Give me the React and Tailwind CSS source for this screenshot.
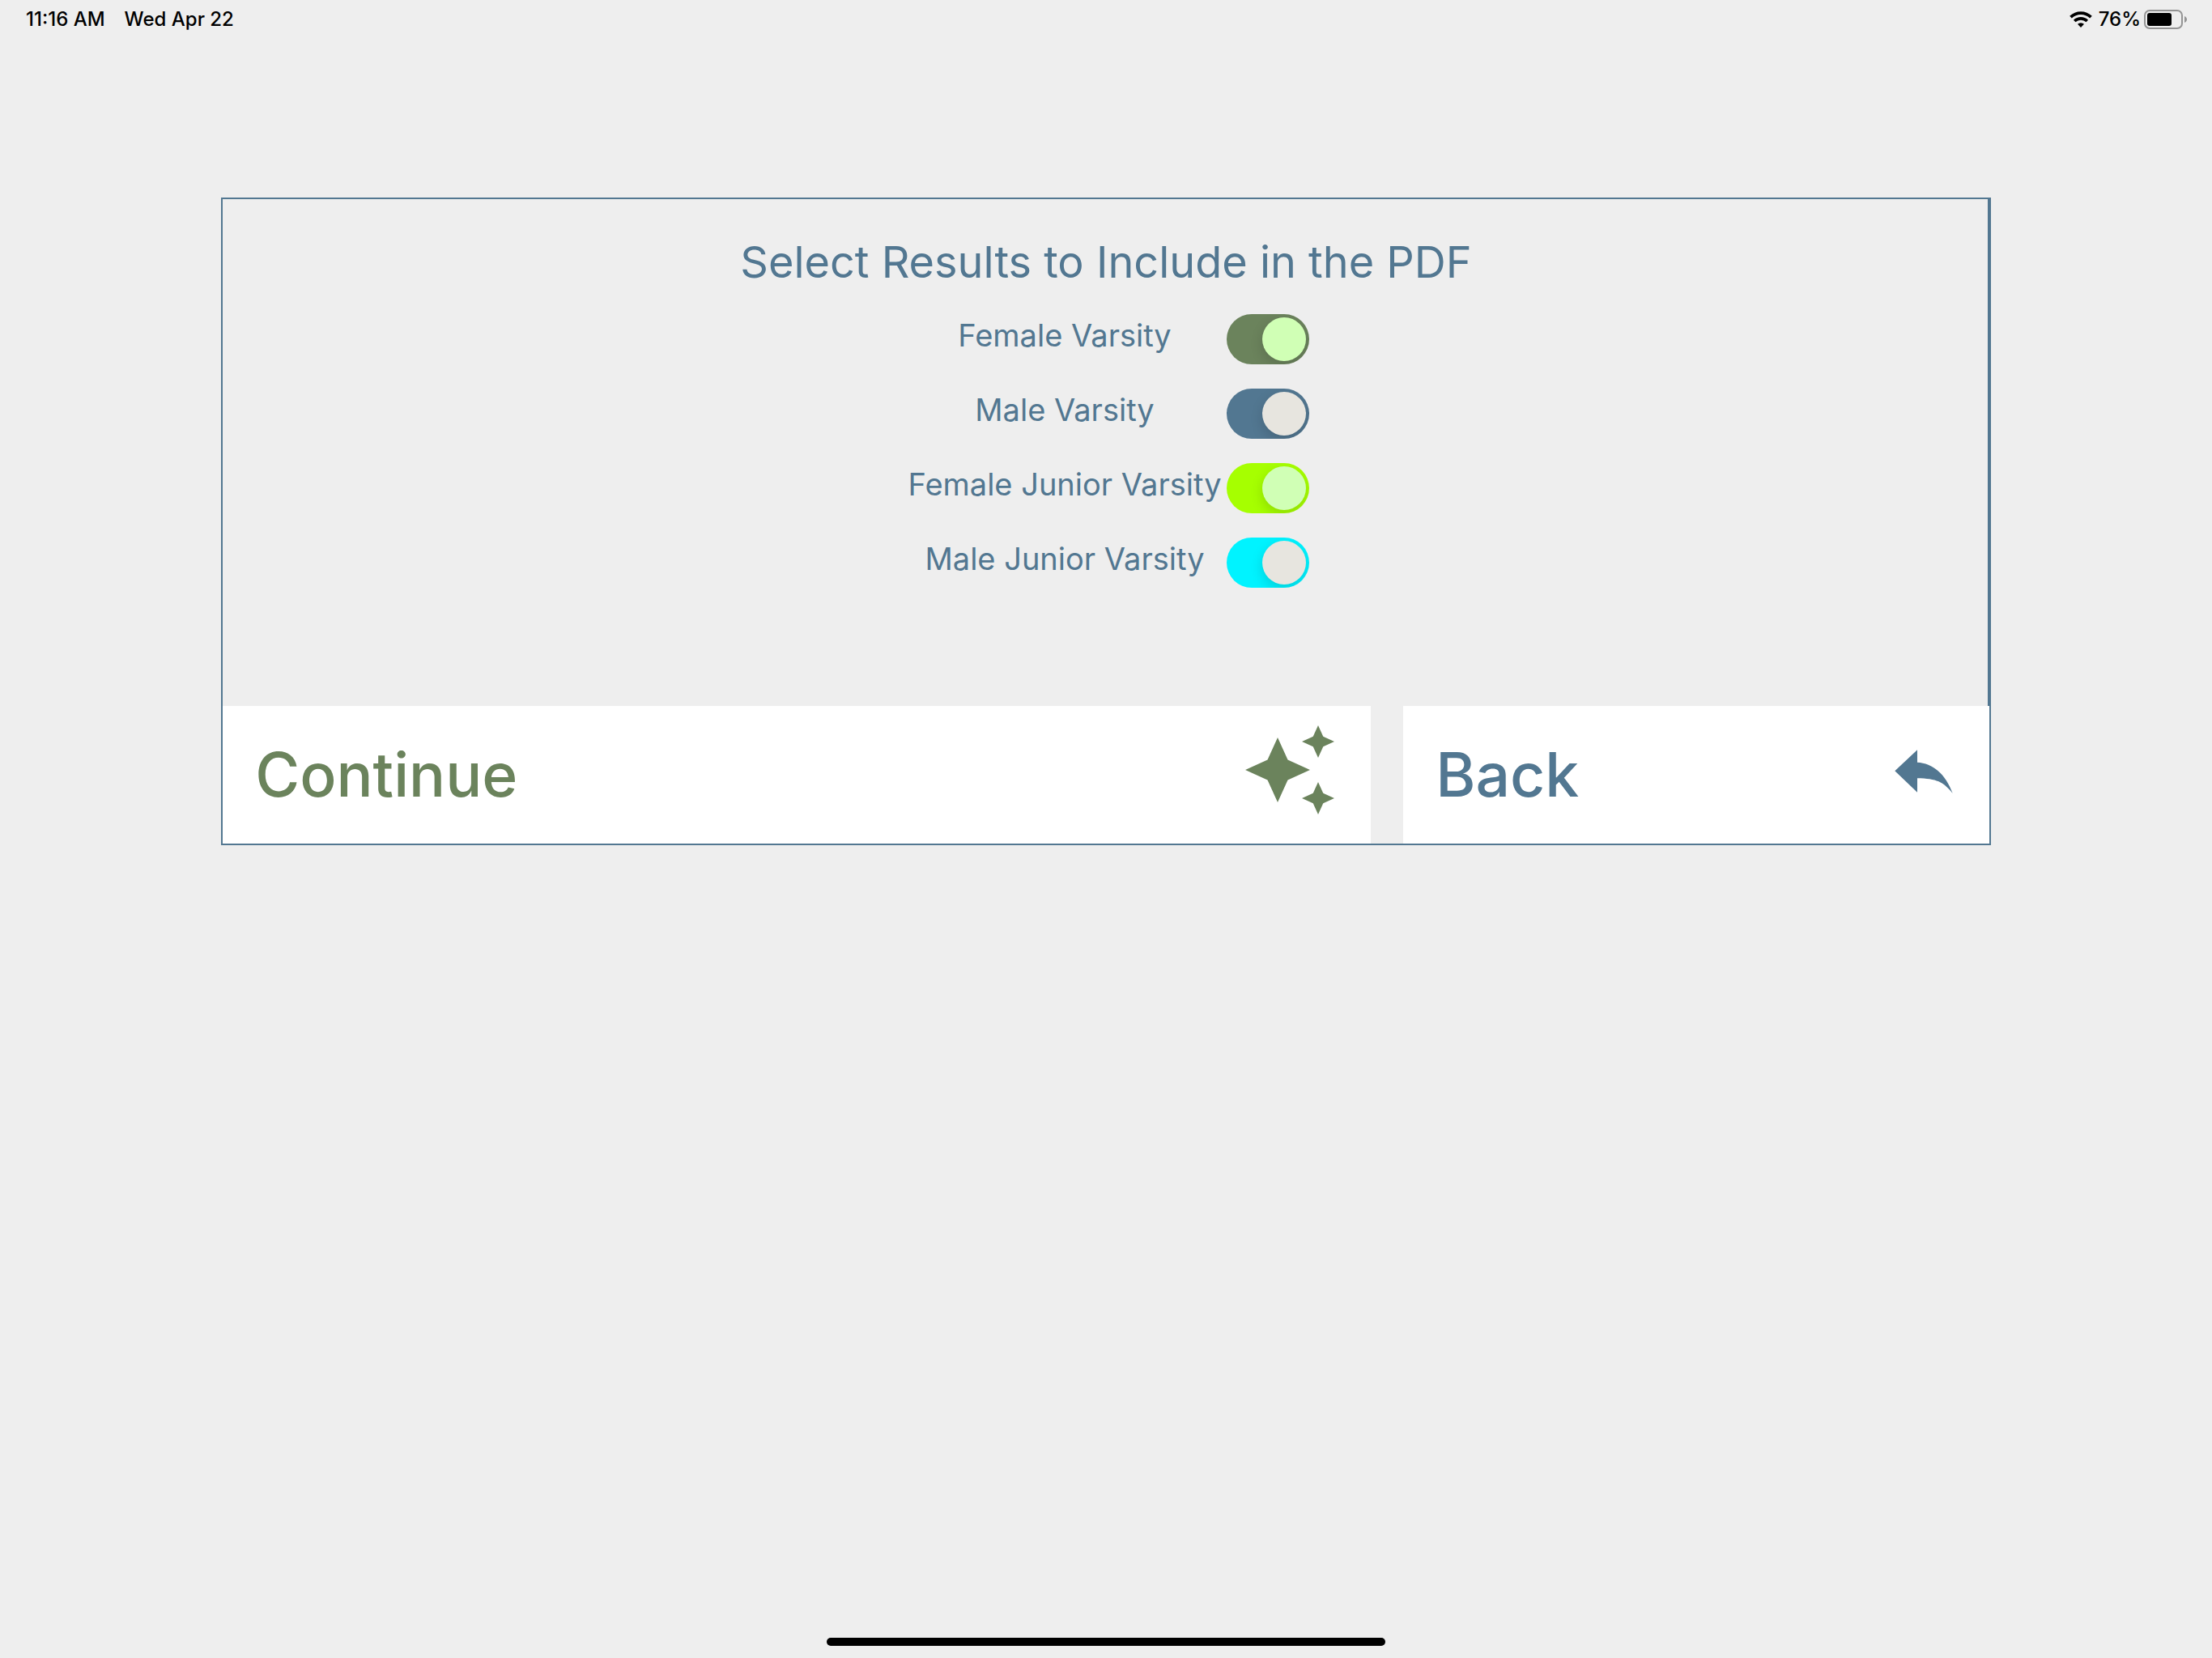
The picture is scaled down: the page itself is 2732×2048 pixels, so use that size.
import React, { useState } from 'react';

const divisions = [
  {
    id: 'female-varsity',
    name: 'Female Varsity',
    colors: 'checked:bg-[#6b835c] before:bg-[#d0ffb5]',
  },
  {
    id: 'male-varsity',
    name: 'Male Varsity',
    colors: 'checked:bg-[#527791] before:bg-[#e7e5df]',
  },
  {
    id: 'female-junior-varsity',
    name: 'Female Junior Varsity',
    colors: 'checked:bg-[#a6ff00] before:bg-[#d0ffb5]',
  },
  {
    id: 'male-junior-varsity',
    name: 'Male Junior Varsity',
    colors: 'checked:bg-[#00f3ff] before:bg-[#e7e5df]',
  },
];

const WifiIcon = () => (
  <svg viewBox="0 0 28 20" className="h-5 w-7" aria-hidden="true">
    <path d="M1.5 7.2a18 18 0 0 1 25 0" fill="none" stroke="currentColor" strokeWidth="3.8" />
    <path d="M6.2 12a11.2 11.2 0 0 1 15.6 0" fill="none" stroke="currentColor" strokeWidth="3.6" />
    <path d="M14 20l-4-4.2a5.8 5.8 0 0 1 8 0z" fill="currentColor" />
  </svg>
);

const BatteryIcon = () => (
  <svg viewBox="0 0 54 24" className="h-6 w-[54px]" aria-hidden="true">
    <rect x="1" y="1" width="46" height="22" rx="6" fill="none" stroke="#949494" strokeWidth="2" />
    <rect x="4" y="4" width="30" height="16" rx="3" fill="currentColor" />
    <path d="M50 8c4 1.5 4 6.500 0 8z" fill="#949494" />
  </svg>
);

const SparkleIcon = () => (
  <svg viewBox="0 0 24 24" fill="currentColor" className="mb-3 size-[120px]" aria-hidden="true">
    <path d="M19 9l1.250-2.750L23 5l-2.750-1.250L19 1l-1.250 2.750L15 5l2.750 1.250L19 9z" />
    <path d="M11.500 9.500L9 4 6.500 9.500 1 12l5.500 2.500L9 20l2.500-5.500L17 12l-5.500-2.500z" />
    <path d="M19 15l-1.250 2.750L15 19l2.750 1.250L19 23l1.250-2.750L23 19l-2.750-1.250L19 15z" />
  </svg>
);

const BackIcon = () => (
  <svg viewBox="0 0 120 120" fill="currentColor" className="mb-3 size-[120px]" aria-hidden="true">
    <path d="M43.300 61.300L71 35.300V50.700C90 51.500 106 65 114.700 89C103 74.500 95 70.800 71 70.300V87.700Z" />
  </svg>
);

const StatusBar = () => (
  <header className="flex h-12 items-center justify-between pl-8 pr-[30px] text-[24px] font-medium text-black">
    <div className="flex gap-6">
      <span>11:16 AM</span>
      <span>Wed Apr 22</span>
    </div>
    <div className="flex items-center">
      <WifiIcon />
      <span className="ml-2 mr-1">76%</span>
      <BatteryIcon />
    </div>
  </header>
);

const DivisionSwitch = ({ division, checked, onChange }) => (
  <div className="flex items-start">
    <label
      htmlFor={division.id}
      className="w-[400px] text-center text-[38px] leading-[52px] whitespace-nowrap"
    >
      {division.name}
    </label>
    <input
      id={division.id}
      type="checkbox"
      role="switch"
      checked={checked}
      onChange={onChange}
      className={`h-[62px] w-[102px] shrink-0 cursor-pointer appearance-none overflow-hidden rounded-full bg-gray-300 p-1 transition before:block before:size-[54px] before:rounded-full before:shadow-[0_6px_16px_rgba(0,0,0,0.15)] before:transition checked:before:translate-x-10 ${division.colors}`}
    />
  </div>
);

const App = () => {
  const [selected, setSelected] = useState(divisions.map((division) => division.id));

  const toggleDivision = (id) => {
    setSelected((current) =>
      current.includes(id) ? current.filter((item) => item !== id) : [...current, id],
    );
  };

  return (
    <div className="flex min-h-screen flex-col bg-[#eeeeee] font-['Inter',sans-serif] text-[#527791]">
      <StatusBar />

      <main className="mx-[10%] mt-[196px] border-2 border-[#527791]">
        <section className="flex flex-col items-center border-r-2 border-[#527791] pt-[42px] pb-[146px] pl-0.5">
          <h1 className="text-[54px] leading-[72px]">Select Results to Include in the PDF</h1>
          <div className="mt-7 flex flex-col gap-[30px]">
            {divisions.map((division) => (
              <DivisionSwitch
                key={division.id}
                division={division}
                checked={selected.includes(division.id)}
                onChange={() => toggleDivision(division.id)}
              />
            ))}
          </div>
        </section>

        <div className="flex gap-10 text-[75px] font-medium">
          <button
            type="button"
            className="flex h-[170px] w-[65%] items-center justify-between bg-white px-10 text-[#6b835c]"
          >
            Continue
            <SparkleIcon />
          </button>
          <button
            type="button"
            className="flex h-[170px] flex-1 items-center justify-between bg-white px-10"
          >
            Back
            <BackIcon />
          </button>
        </div>
      </main>

      <div className="mx-auto mt-auto mb-[15px] h-[10px] w-[690px] rounded-full bg-black" />
    </div>
  );
};

export default App;
